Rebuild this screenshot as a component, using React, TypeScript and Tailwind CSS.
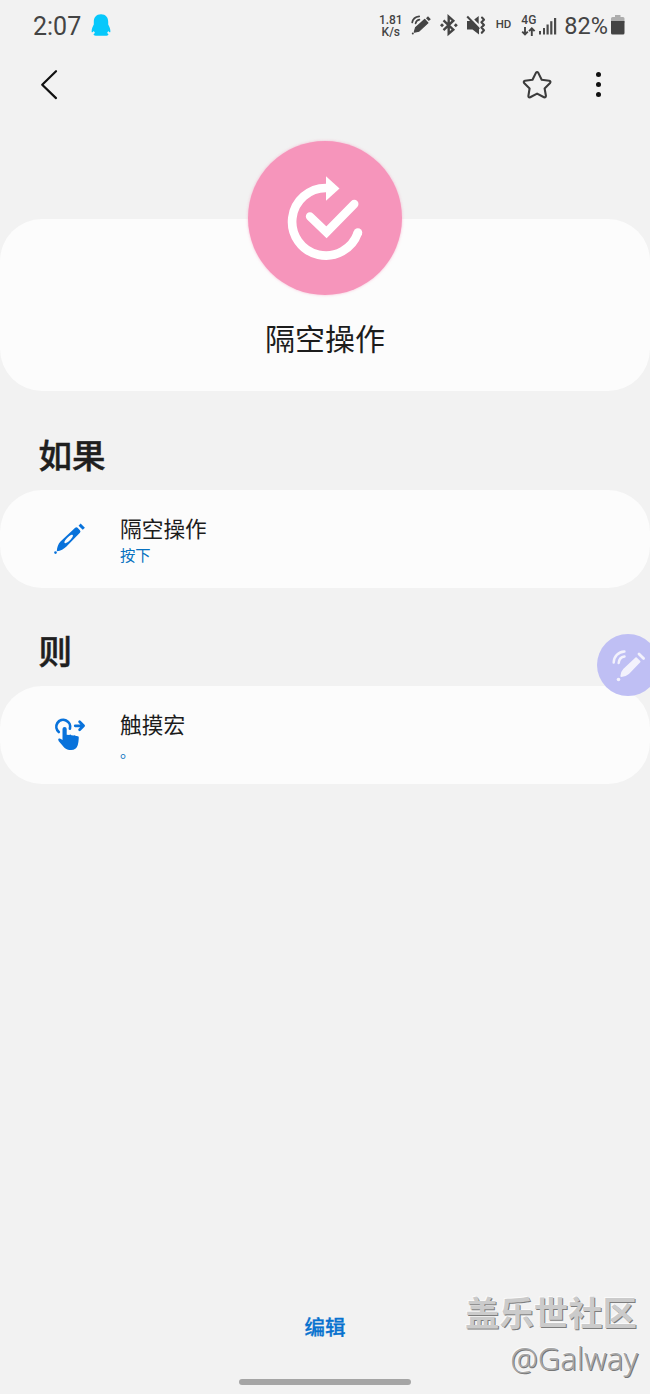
import type { ReactNode } from 'react';

interface RoutineStep {
    title: string;
    detail: string;
    icon: ReactNode;
}

function QQIcon() {
    return (
        <svg className="ml-[10px] h-6 w-5" viewBox="91 12 20 24" fill="#06c8fb">
            <path d="M101 13.200c-4.800 0-7.200 3.300-7.200 7.600v2.700c-1 2-2.300 4.500-2.200 7 .1 1.400 1 1 2.300-.6.3.9.7 1.600 1.300 2.200-1 .4-1.600 1-1.600 1.400 0 .9 1.700 1.300 3.500 1.300h8c1.800 0 3.300-.4 3.300-1.300 0-.6-.6-1-1.500-1.400.6-.6 1-1.300 1.300-2.200 1.200 1.600 2 2 2.200.6.2-2.500-1.200-5-2.200-7v-2.700c0-4.300-2.400-7.600-7.200-7.600z" />
        </svg>
    );
}

function AirPenIcon() {
    return (
        <svg className="ml-[7px] h-6 w-[22px]" viewBox="410 12 22 24" fill="none" stroke="#444" strokeWidth="1.700" strokeLinecap="round">
            <path d="M412.200 21.500c.6-3.500 3.200-5.800 7-6.200M415.600 22.300c.4-2 1.600-3.200 3.800-3.600" />
            <path d="M414.300 31.200l1.200-4.400 9.200-8.300 3.200 3.300-8.900 8.300z" fill="#444" stroke="#444" strokeWidth="1.200" strokeLinejoin="round" />
            <path d="M427 16.200l2.800 2.900" strokeWidth="2.800" strokeLinecap="butt" />
            <circle cx="412.800" cy="32.600" r="1" fill="#444" stroke="none" />
        </svg>
    );
}

function BluetoothIcon() {
    return (
        <svg className="ml-[7px] h-6 w-5" viewBox="439 12 20 24" fill="none" stroke="#444" strokeWidth="2.400">
            <path d="M443.500 19.300l9.800 9.400-4.600 4v-17l4.600 4-9.800 9.400" />
            <path d="M442 22.200l2 2-2 2-2-2zM455.800 22.200l2 2-2 2-2-2z" fill="#444" stroke="none" />
        </svg>
    );
}

function MutedVibrateIcon() {
    return (
        <svg className="ml-[7px] h-6 w-5" viewBox="466 12 20 24" fill="#444">
            <path d="M467 20h5.500l6.500 6.500v7L472.500 28.500H467zM474.200 18.500l4.500-3.500v8z" />
            <path d="M467.200 15.500l12 12.500" stroke="#444" strokeWidth="2" />
            <path d="M482 16.500l2 2.200-2.600 2.600 2.600 2.700-2.600 2.600 2.600 2.600-2.200 2.600" fill="none" stroke="#444" strokeWidth="2.100" strokeLinejoin="round" strokeLinecap="round" />
        </svg>
    );
}

function DataArrowsIcon() {
    return (
        <svg className="mt-px h-[9px] w-[15px]" viewBox="0 0 15 9" fill="none" stroke="#444" strokeWidth="1.900">
            <path d="M4 0v7.500M1.200 4.700L4 7.500l2.800-2.800M10.800 9V1.300M8 4.200l2.800-2.800 2.800 2.800" />
        </svg>
    );
}

function SignalIcon() {
    return (
        <svg className="mt-px ml-[3px] h-[18px] w-[18px]" viewBox="0 0 18 18" fill="#4a4a4a">
            <rect x="0" y="14" width="2" height="3.500" />
            <rect x="4" y="11" width="2" height="6.500" />
            <rect x="7.500" y="7.500" width="2.200" height="10" />
            <rect x="11.200" y="4.200" width="2.200" height="13.300" />
            <rect x="15" y="1" width="2.200" height="16.500" />
        </svg>
    );
}

function BatteryIcon() {
    return (
        <svg className="ml-[3px] h-5 w-[14px]" viewBox="0 0 14 20">
            <path d="M4 0h5.500v2H12a1.500 1.500 0 0 1 1.500 1.500V8H0V3.500A1.500 1.500 0 0 1 1.500 2H4z" fill="#adadad" />
            <path d="M0 6h13.500v12a1.500 1.500 0 0 1-1.500 1.500H1.500A1.500 1.500 0 0 1 0 18z" fill="#444" />
        </svg>
    );
}

function StatusBar() {
    return (
        <div className="flex h-[50px] items-center pr-[25px] pl-[33px] text-[#444]">
            <span className="mt-1 font-['Roboto',sans-serif] text-[25px]">2:07</span>
            <QQIcon />
            <div className="ml-auto flex items-center">
                <div className="mt-px flex flex-col items-center font-['Roboto',sans-serif] text-[12px] leading-[12px] font-medium">
                    <span>1.81</span>
                    <span>K/s</span>
                </div>
                <AirPenIcon />
                <BluetoothIcon />
                <MutedVibrateIcon />
                <span className="ml-[10px] font-['Roboto',sans-serif] text-[11.500px] font-medium">HD</span>
                <div className="ml-[10px] flex flex-col items-center">
                    <span className="font-['Roboto',sans-serif] text-[12px] leading-[11px] font-medium">4G</span>
                    <DataArrowsIcon />
                </div>
                <SignalIcon />
                <span className="mt-[3px] ml-[7px] font-['Roboto',sans-serif] text-[23.500px]">82%</span>
                <BatteryIcon />
            </div>
        </div>
    );
}

function AppBar() {
    return (
        <div className="flex h-[70px] items-center pr-[47px] pl-[38px]">
            <button aria-label="返回">
                <svg className="h-8 w-6" viewBox="38 69 24 32" fill="none" stroke="#111" strokeWidth="2.200" strokeLinecap="round" strokeLinejoin="round">
                    <path d="M56 71.200L42.200 84.700 56 98.100" />
                </svg>
            </button>
            <button className="ml-auto" aria-label="收藏">
                <svg className="h-8 w-8" viewBox="521 69 32 32" fill="none" stroke="#3c3c3c" strokeWidth="2.100" strokeLinejoin="round">
                    <path d="M535.900 72.900q1.200-1.700 2.400 0l3.400 6.900 7.500 1q2 .6.900 2.200l-5.500 5.400 1.300 7.400q0 2-1.900 1.500l-6.900-3.700-6.900 3.700q-2 .5-1.800-1.500l1.200-7.400-5.500-5.400q-1-1.700.9-2.200l7.500-1z" />
                </svg>
            </button>
            <button className="ml-10" aria-label="更多">
                <svg className="h-8 w-2.5" viewBox="593 69 10 32" fill="#111">
                    <circle cx="598.500" cy="74.600" r="2.500" />
                    <circle cx="598.500" cy="84.600" r="2.500" />
                    <circle cx="598.500" cy="94.600" r="2.500" />
                </svg>
            </button>
        </div>
    );
}

function RoutineIcon() {
    return (
        <svg className="h-[154px] w-[154px] rounded-full bg-[#f695bb] shadow-[0_0_3px_rgba(246,149,187,0.6)]" viewBox="248 141 154 154" fill="none" stroke="#fff" strokeWidth="8.700" strokeLinecap="round">
            <path d="M326.500 188A33.800 33.800 0 1 0 357.900 232.700" strokeLinecap="butt" />
            <path d="M357.900 232.700v0" />
            <path d="M326 176.300v24.400l13.500-12.200z" fill="#fff" stroke="none" />
            <path d="M310 216.500l16.500 15.800L354.300 204" strokeWidth="8.400" />
        </svg>
    );
}

function PenIcon() {
    return (
        <svg className="h-9 w-9" viewBox="52 521 36 36" fill="#0872db">
            <path fillRule="evenodd" d="M56.800 551.200c.2-3.800 1.300-6.900 3.700-9.600l14.700-13.800q1.200-1 2.400 0l2.300 2.400q1.200 1.200 0 2.500L66.200 546.700c-2.400 2.200-5.400 4-9.400 4.500zM65.500 543.300c2.500-.6 6.200-4.200 7.400-7.200q.3-1.700-1.300-1.300c-3 1.400-6.400 4.600-7.200 7.200q-.1 1.500 1.100 1.300z" />
            <path d="M79.600 524.600l4.200 4.200" stroke="#0872db" strokeWidth="3" strokeLinecap="butt" />
            <circle cx="55.500" cy="552.600" r="1.300" />
        </svg>
    );
}

function SwipeIcon() {
    return (
        <svg className="h-9 w-9" viewBox="52 717 36 36" fill="none" stroke="#0872db" strokeWidth="2.700" strokeLinecap="round" strokeLinejoin="round">
            <path d="M58.800 732A6.900 6.900 0 1 1 69.900 728.600" />
            <path d="M75.200 725.800h8M79.600 721.800l4 4-4 4" />
            <path d="M62.500 729q0-2.100 2.100-2.100t2.100 2.100v5.700l2.500.2q1.300-.8 2.200.4l2.200.2q1.500-.7 2.200.5 1.600-.4 2.700.5.400.4.200 2.500-.2 3.500-.9 6c-1 3.300-3.300 5-6.600 5-3 0-5-.6-6.800-2.300l-5.600-6.500q-1.300-1.700 0-2.600 1.500-.8 3.700 1.300z" fill="#0872db" stroke="none" />
        </svg>
    );
}

function StepCard({ title, detail, icon }: RoutineStep) {
    return (
        <div className="flex h-[98px] items-center rounded-[42px] bg-[#fcfcfc] pl-[52px]">
            {icon}
            <div className="ml-8 flex flex-col">
                <span className="text-[21.700px] leading-[30px] text-[#1c1c1c]">{title}</span>
                <span className="text-[15.300px] leading-[22px] text-[#0872c0]">{detail}</span>
            </div>
        </div>
    );
}

function FloatingPen() {
    return (
        <div className="absolute top-[634px] right-0 h-[62px] w-[53px] overflow-hidden">
            <svg className="h-[62px] w-[62px]" viewBox="597 634 62 62" fill="none" stroke="#f3f2fc" strokeLinecap="round">
                <circle cx="628" cy="665" r="31" fill="#bfbff4" stroke="none" />
                <path d="M613.700 662.500c.2-6 4.500-10.600 10.700-11M618.700 663c.3-3.800 2.400-6 5.800-6.500" strokeWidth="2.500" />
                <path d="M621.300 676c.2-2.600 1-4.800 2.800-6.600l12-11.300 3.500 3.600-11.300 11.600c-2 1.800-4.200 2.700-7 2.700z" fill="#f3f2fc" strokeWidth="1.800" strokeLinejoin="round" />
                <path d="M639 654l4.600 4.600" strokeWidth="2.800" />
                <circle cx="618.500" cy="679.500" r="1.800" fill="#f3f2fc" stroke="none" />
            </svg>
        </div>
    );
}

function Watermark() {
    return (
        <div className="absolute right-3 bottom-[15px] flex flex-col items-end">
            <span className="mr-px mb-0.5 text-[34.400px] leading-[48px] font-bold text-[#cbcbcb] [text-shadow:1px_1px_0_#7d7d7d,-1px_-1px_0_#fafafa]">盖乐世社区</span>
            <span className="font-['Noto_Sans',sans-serif] text-[31px] leading-[42px] font-light text-[#a6a6a6] [text-shadow:1px_1px_0_#777,-1px_-1px_0_#fafafa]">@Galway</span>
        </div>
    );
}

export default function App() {
    return (
        <div className="relative flex h-[1394px] w-[650px] flex-col overflow-hidden bg-[#f2f2f2] font-['Noto_Sans_CJK_SC',sans-serif]">
            <StatusBar />
            <AppBar />

            {/* Routine name */}
            <div className="mt-[99px] flex h-[172px] flex-col items-center rounded-[42px] bg-[#fcfcfc]">
                <div className="-mt-[78px]">
                    <RoutineIcon />
                </div>
                <h1 className="mt-5 text-[30px] leading-[44px] text-[#1c1c1c]">隔空操作</h1>
            </div>

            <h2 className="mt-[38px] mb-[11px] pl-[38.500px] text-[33.500px] leading-[50px] font-medium text-[#1f1f1f] [-webkit-text-stroke:0.5px_#1f1f1f]">如果</h2>
            <StepCard title="隔空操作" detail="按下" icon={<PenIcon />} />

            <h2 className="mt-[37px] mb-[11px] pl-[38.500px] text-[33.500px] leading-[50px] font-medium text-[#1f1f1f] [-webkit-text-stroke:0.5px_#1f1f1f]">则</h2>
            <StepCard title="触摸宏" detail="。" icon={<SwipeIcon />} />

            <div className="mt-auto flex flex-col items-center pb-[9px]">
                <button className="text-[20.500px] leading-[30px] font-medium text-[#0872cf] [-webkit-text-stroke:0.3px_#0872cf]">编辑</button>
                <div className="mt-[38px] h-[6px] w-[172px] rounded-full bg-[#a5a5a5]" />
            </div>

            <FloatingPen />
            <Watermark />
        </div>
    );
}
